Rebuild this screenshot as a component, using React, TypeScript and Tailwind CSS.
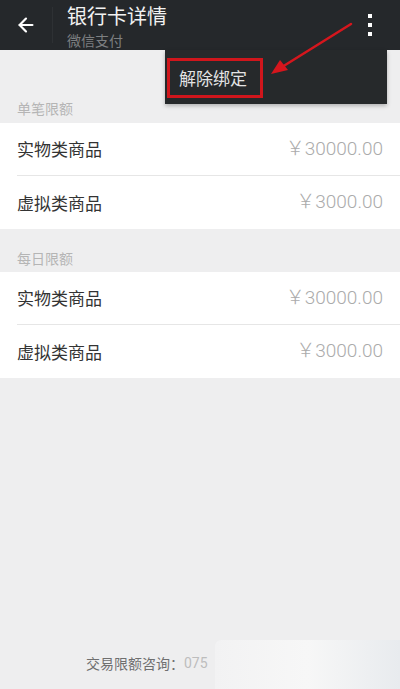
import { ArrowLeft } from "lucide-react";

const font = { fontFamily: '"Noto Sans CJK SC", "Noto Sans", sans-serif' };
const numFont = { fontFamily: 'Roboto, "Noto Sans CJK SC", sans-serif' };

type Row = { name: string; amount: string };

const limits: Row[] = [
  { name: "实物类商品", amount: "￥30000.00" },
  { name: "虚拟类商品", amount: "￥3000.00" },
];

function LimitList({ rows }: { rows: Row[] }) {
  return (
    <div className="bg-white pl-[17px]">
      {rows.map((r, i) => (
        <div
          key={r.name}
          className={`flex h-[53px] items-center justify-between pr-[17px] ${
            i < rows.length - 1 ? "border-b border-[#e6e6e6]" : ""
          }`}
        >
          <span className="text-[17px] text-[#333333]">{r.name}</span>
          <span className="text-[19px] font-light text-[#ababab]" style={numFont}>
            {r.amount}
          </span>
        </div>
      ))}
    </div>
  );
}

export default function App() {
  return (
    <div className="relative flex h-[689px] w-[400px] flex-col overflow-hidden bg-[#eeeeef]" style={font}>
      {/* header */}
      <div className="flex h-[50px] shrink-0 items-center bg-[#25282b]">
        <div className="flex w-[52px] justify-center">
          <ArrowLeft className="h-[22px] w-[22px] text-white" strokeWidth={2.4} />
        </div>
        <div className="h-[36px] w-px bg-[#2e3134]" />
        <div className="ml-[14px] flex flex-col">
          <span className="text-[20px] leading-[26px] text-[#f2f2f2]">银行卡详情</span>
          <span className="mt-[3px] text-[14px] leading-[16px] text-[#7d7f81]">微信支付</span>
        </div>
        <div className="ml-auto mr-[28px] flex flex-col gap-[5px]">
          <span className="h-[4px] w-[4px] bg-white" />
          <span className="h-[4px] w-[4px] bg-white" />
          <span className="h-[4px] w-[4px] bg-white" />
        </div>
      </div>

      {/* single limit */}
      <div className="h-[73px] pl-[17px] pt-[48px] text-[14px] leading-[20px] text-[#b5b5b5]">单笔限额</div>
      <LimitList rows={limits} />

      {/* daily limit */}
      <div className="h-[43px] pl-[17px] pt-[19px] text-[14px] leading-[20px] text-[#b5b5b5]">每日限额</div>
      <LimitList rows={limits} />

      {/* footer */}
      <div className="mt-auto flex h-[50px] items-center pb-[2px] pl-[86px]">
        <span className="text-[14px] text-[#6f6f6f]">交易限额咨询：</span>
        <span className="text-[14px] text-[#bdbdbd]" style={numFont}>
          075
        </span>
      </div>
      {/* blurred-out area over the phone number */}
      <div className="absolute left-[215px] top-[640px] h-[49px] w-[185px] rounded-tl-[6px] bg-gradient-to-r from-[#f2f2f3] via-[#f7f7f7] to-[#e8ebee]" />

      {/* popup menu */}
      <div className="absolute left-[165px] top-[50px] h-[54px] w-[222px] bg-[#26292b] shadow-[0_2px_4px_rgba(0,0,0,0.25)]">
        <div className="ml-[2px] mt-[8px] flex h-[40px] w-[96px] items-center border-[3px] border-[#d0161c] pl-[9px]">
          <span className="text-[17px] text-[#e3e3e3]">解除绑定</span>
        </div>
      </div>

      {/* red arrow */}
      <svg className="absolute left-0 top-0" width="400" height="120" viewBox="0 0 400 120">
        <line x1="351" y1="24" x2="282" y2="67" stroke="#d5161d" strokeWidth="2.5" strokeLinecap="round" />
        <polygon points="271,74 280,60 288,70" fill="#d5161d" />
      </svg>
    </div>
  );
}
